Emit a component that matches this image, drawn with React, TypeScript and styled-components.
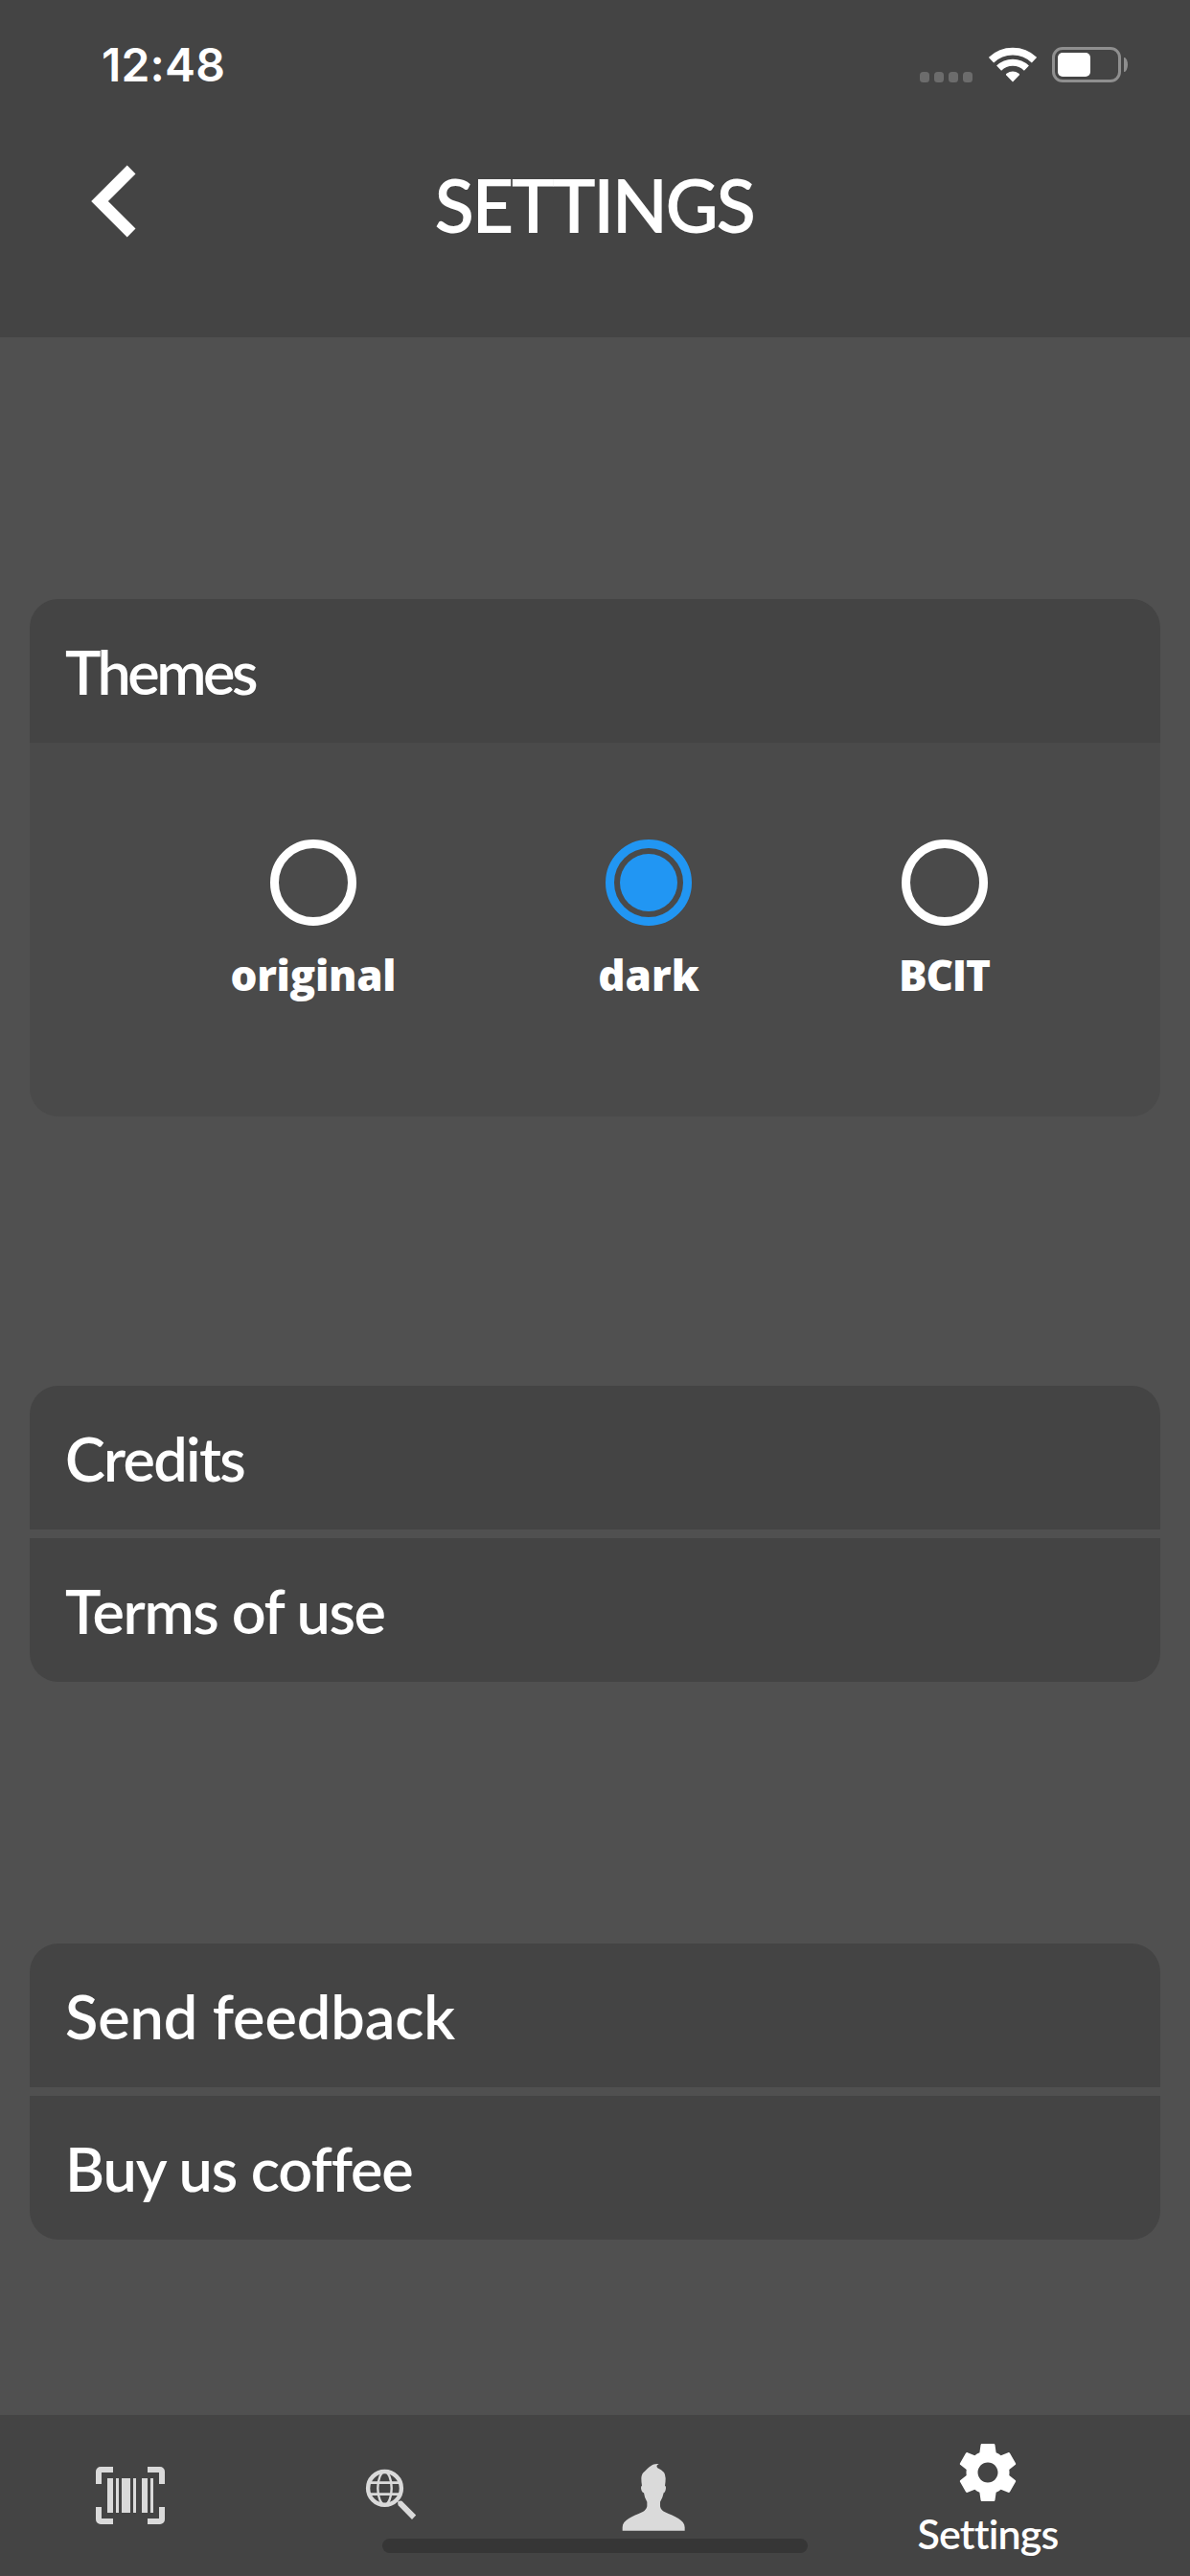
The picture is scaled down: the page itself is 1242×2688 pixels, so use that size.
import React, { useState } from "react";
import styled, { createGlobalStyle } from "styled-components";

const GlobalStyle = createGlobalStyle`
  * { box-sizing: border-box; }
  body {
    margin: 0;
    background: #505050;
    color: #fff;
    font-family: Lato, "Open Sans", sans-serif;
  }
  button {
    margin: 0;
    padding: 0;
    border: 0;
    background: none;
    color: inherit;
    font: inherit;
  }
`;

const Screen = styled.div`
  display: flex;
  flex-direction: column;
  width: 1242px;
  height: 2688px;
  overflow: hidden;
`;

const Header = styled.header`
  height: 352px;
  background: #444;
`;

const StatusBar = styled.div`
  display: flex;
  align-items: center;
  justify-content: space-between;
  height: 135px;
  padding: 0 65px 0 106px;
`;

const Clock = styled.time`
  font-family: Inter, sans-serif;
  font-size: 48px;
  font-weight: 600;
  letter-spacing: 0.2px;
  line-height: 60px;
`;

const StatusIcons = styled.div`
  display: flex;
  align-items: center;
`;

const SignalDots = styled.div`
  display: flex;
  gap: 5px;
  align-self: flex-end;
  margin-right: 17px;
`;

const Dot = styled.span`
  width: 10px;
  height: 11px;
  border-radius: 3.5px;
  background: #6c6c6c;
`;

const WifiIcon = styled.svg`
  width: 50px;
  height: 37px;
  margin-right: 16px;
`;

const Battery = styled.div`
  display: flex;
  width: 72px;
  height: 37px;
  padding: 3px;
  border: 3px solid #8f8f8f;
  border-radius: 11px;
`;

const BatteryLevel = styled.span`
  width: 34px;
  border-radius: 5px;
  background: #fff;
`;

const BatteryCap = styled.span`
  width: 4px;
  height: 15px;
  margin-left: 3px;
  border-radius: 0 4px 4px 0 / 0 8px 8px 0;
  background: #8f8f8f;
`;

const NavBar = styled.div`
  display: grid;
  grid-template-columns: 240px 1fr 242px;
  align-items: center;
  height: 157px;
`;

const BackButton = styled.button`
  display: flex;
  padding: 0 0 8px 95px;
`;

const BackIcon = styled.svg`
  width: 47px;
  height: 76px;
`;

const Title = styled.h1`
  margin: 0;
  text-align: center;
  font-size: 76px;
  font-weight: 600;
  letter-spacing: -2.5px;
  line-height: 92px;
`;

const Content = styled.main`
  flex: 1;
  padding: 273px 31px 0;
`;

const Card = styled.section<{ $after?: number }>`
  display: flex;
  flex-direction: column;
  gap: 9px;
  margin-bottom: ${(p) => p.$after ?? 0}px;
  border-radius: 30px;
  overflow: hidden;
`;

const ThemeCard = styled(Card)`
  gap: 0;
`;

const Row = styled.div<{ $tracking: number }>`
  height: 150px;
  padding-left: 37px;
  background: #444;
  font-size: 63px;
  font-weight: 600;
  letter-spacing: ${(p) => p.$tracking}px;
  line-height: 151px;
  white-space: nowrap;
`;

const ThemeOptions = styled.div`
  display: flex;
  gap: 211px;
  height: 390px;
  padding: 101px 0 0 210px;
  background: #4a4a4a;
`;

const ThemeOption = styled.button<{ $width: number }>`
  display: flex;
  flex-direction: column;
  align-items: center;
  gap: 24px;
  width: ${(p) => p.$width}px;
`;

const Ring = styled.span<{ $on: boolean }>`
  display: flex;
  flex: none;
  align-items: center;
  justify-content: center;
  width: 90px;
  height: 90px;
  border: 9px solid ${(p) => (p.$on ? "#2196f3" : "#fff")};
  border-radius: 50%;
`;

const RingFill = styled.span`
  width: 60px;
  height: 60px;
  border-radius: 50%;
  background: #2196f3;
`;

const OptionLabel = styled.span<{ $tracking: number }>`
  margin-right: ${(p) => -p.$tracking}px;
  font-family: "Open Sans", sans-serif;
  font-size: 44px;
  font-weight: 800;
  letter-spacing: ${(p) => p.$tracking}px;
  line-height: 54px;
  white-space: nowrap;
`;

const TabBar = styled.nav`
  position: relative;
  display: grid;
  grid-template-columns: 272px 272px 276px 422px;
  height: 168px;
  background: #444;
  border-bottom: 1px solid #4a4446;
`;

const Tab = styled.button<{ $active?: boolean }>`
  display: flex;
  flex-direction: column;
  align-items: center;
  justify-content: ${(p) => (p.$active ? "flex-start" : "center")};
  height: 168px;
  padding-top: ${(p) => (p.$active ? 24 : 0)}px;
  color: ${(p) => (p.$active ? "#fff" : "#dadada")};
`;

const TabIcon = styled.svg<{ $size: number }>`
  flex: none;
  width: ${(p) => p.$size}px;
  height: ${(p) => p.$size}px;
`;

const TabLabel = styled.span`
  font-size: 43px;
  font-weight: 600;
  letter-spacing: -0.8px;
  line-height: 55px;
`;

const HomeIndicator = styled.div`
  position: absolute;
  left: 399px;
  bottom: 23px;
  width: 444px;
  height: 15px;
  border-radius: 8px;
  background: #363636;
`;

const themes = [
  { name: "original", width: 172, tracking: -0.3 },
  { name: "dark", width: 106, tracking: 0 },
  { name: "BCIT", width: 90, tracking: -1.2 },
];

export default function App() {
  const [theme, setTheme] = useState("dark");

  return (
    <>
      <GlobalStyle />
      <Screen>
        <Header>
          <StatusBar>
            <Clock>12:48</Clock>
            <StatusIcons>
              <SignalDots>
                <Dot />
                <Dot />
                <Dot />
                <Dot />
              </SignalDots>
              <WifiIcon viewBox="0 0 50 37" fill="none" stroke="#fff">
                <path d="M2.5 13.6A32.5 32.5 0 0 1 47.5 13.6" strokeWidth="7.7" />
                <path d="M10.6 22.1A20.7 20.7 0 0 1 39.4 22.1" strokeWidth="7.2" />
                <path
                  d="M25 36.5 18 29.2Q17.6 28.4 18.5 27.8Q25 23.4 31.5 27.8Q32.4 28.4 32 29.2Z"
                  fill="#fff"
                  stroke="none"
                />
              </WifiIcon>
              <Battery>
                <BatteryLevel />
              </Battery>
              <BatteryCap />
            </StatusIcons>
          </StatusBar>
          <NavBar>
            <BackButton aria-label="Back">
              <BackIcon viewBox="0 0 47 76" fill="#fff">
                <path d="M37.7 .5 46.5 9.4 17.9 38 46.5 66.6 37.7 75.5 .2 38Z" />
              </BackIcon>
            </BackButton>
            <Title>SETTINGS</Title>
          </NavBar>
        </Header>

        <Content>
          <ThemeCard $after={281}>
            <Row $tracking={-3.5}>Themes</Row>
            <ThemeOptions>
              {themes.map((t) => (
                <ThemeOption key={t.name} $width={t.width} onClick={() => setTheme(t.name)}>
                  <Ring $on={theme === t.name}>{theme === t.name && <RingFill />}</Ring>
                  <OptionLabel $tracking={t.tracking}>{t.name}</OptionLabel>
                </ThemeOption>
              ))}
            </ThemeOptions>
          </ThemeCard>
          <Card $after={273}>
            <Row $tracking={-1.7}>Credits</Row>
            <Row $tracking={-1.4}>Terms of use</Row>
          </Card>
          <Card>
            <Row $tracking={-0.1}>Send feedback</Row>
            <Row $tracking={-1.1}>Buy us coffee</Row>
          </Card>
        </Content>

        <TabBar>
          <Tab aria-label="Scan">
            <TabIcon $size={84} viewBox="0 0 84 84" fill="currentColor">
              <path d="M6 30V17a5 5 0 0 1 5-5H24V18H12V30ZM60 12H73a5 5 0 0 1 5 5V30H72V18H60ZM6 54V67a5 5 0 0 0 5 5H24V66H12V54ZM60 72H73a5 5 0 0 0 5-5V54H72V66H60Z" />
              <path d="M18 24H24V60H18ZM27 24H30V60H27ZM33 24H42V60H33ZM45 24H48V60H45ZM54 24H60V60H54ZM63 24H66V60H63Z" />
            </TabIcon>
          </Tab>
          <Tab aria-label="Search">
            <TabIcon $size={84} viewBox="0 0 84 84" fill="none" stroke="currentColor">
              <circle cx="35.5" cy="34.4" r="17.4" strokeWidth="4.4" />
              <ellipse cx="35.5" cy="34.4" rx="7.2" ry="17" strokeWidth="2.4" />
              <path d="M19.5 28.6H51.5M19.5 40.6H51.5" strokeWidth="2.8" />
              <path
                d="M49.2 48.3 52.2 47.6Q53.4 47.6 54.2 48.4L68.2 62.6 64 66.9 49.8 52.4Q49 51.5 49.2 48.3Z"
                fill="currentColor"
                stroke="none"
              />
            </TabIcon>
          </Tab>
          <Tab aria-label="Profile">
            <TabIcon $size={84} viewBox="0 0 84 84" fill="currentColor">
              <path
                transform="translate(4 4) scale(.33333)"
                d="M131 15Q120 20 127 28Q152 38 152 60Q152 72 150 83Q153 84 153 90Q152 103 146 106Q143 122 135 134V148Q137 160 150 166C180 180 212 190 212 214V224H17V214C17 190 49 180 79 166Q91 160 94 148V134Q86 122 84 106Q76 103 75 90Q75 84 78 83Q76 72 76 60Q77 44 87 38C103 23 110 13 131 15Z"
              />
            </TabIcon>
          </Tab>
          <Tab $active>
            <TabIcon $size={72} viewBox="0 0 24 24" fill="currentColor">
              <path d="M19.43 12.98c.04-.32.07-.64.07-.98s-.03-.66-.07-.98l2.11-1.65c.19-.15.24-.42.12-.64l-2-3.46c-.12-.22-.39-.3-.61-.22l-2.49 1c-.52-.4-1.08-.73-1.69-.98l-.38-2.65C14.46 2.18 14.25 2 14 2h-4c-.25 0-.46.18-.49.42l-.38 2.65c-.61.25-1.17.59-1.69.98l-2.49-1c-.23-.09-.49 0-.61.22l-2 3.46c-.13.22-.07.49.12.64l2.11 1.65c-.04.32-.07.65-.07.98s.03.66.07.98l-2.11 1.65c-.19.15-.24.42-.12.64l2 3.46c.12.22.39.3.61.22l2.49-1c.52.4 1.08.73 1.69.98l.38 2.65c.03.24.24.42.49.42h4c.25 0 .46-.18.49-.42l.38-2.65c.61-.25 1.17-.59 1.69-.98l2.49 1c.23.09.49 0 .61-.22l2-3.46c.12-.22.07-.49-.12-.64l-2.11-1.65zM12 15.5c-1.93 0-3.5-1.57-3.5-3.5s1.57-3.5 3.5-3.5 3.5 1.57 3.5 3.5-1.57 3.5-3.5 3.5z" />
            </TabIcon>
            <TabLabel>Settings</TabLabel>
          </Tab>
          <HomeIndicator />
        </TabBar>
      </Screen>
    </>
  );
}
